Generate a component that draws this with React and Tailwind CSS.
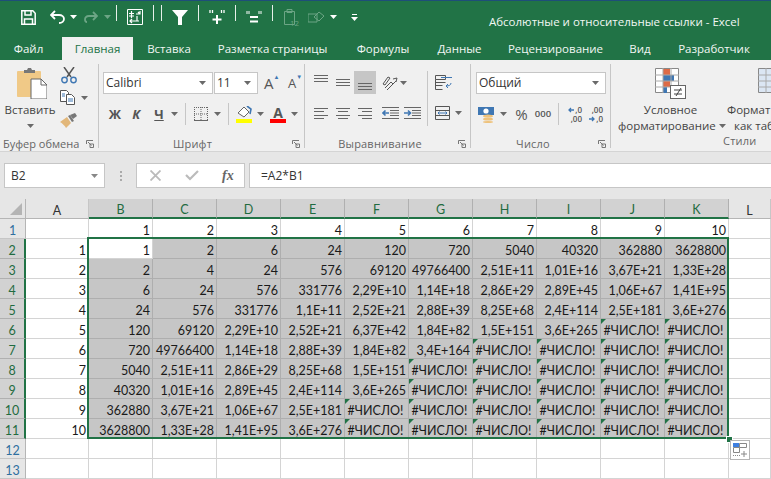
import React from 'react';

const E = '#ЧИСЛО!';
const COLS = ['A', 'B', 'C', 'D', 'E', 'F', 'G', 'H', 'I', 'J', 'K', 'L'];
const SELECTED = ['B', 'C', 'D', 'E', 'F', 'G', 'H', 'I', 'J', 'K'];

const ROWS = [
  ['', '1', '2', '3', '4', '5', '6', '7', '8', '9', '10', ''],
  ['1', '1', '2', '6', '24', '120', '720', '5040', '40320', '362880', '3628800', ''],
  ['2', '2', '4', '24', '576', '69120', '49766400', '2,51E+11', '1,01E+16', '3,67E+21', '1,33E+28', ''],
  ['3', '6', '24', '576', '331776', '2,29E+10', '1,14E+18', '2,86E+29', '2,89E+45', '1,06E+67', '1,41E+95', ''],
  ['4', '24', '576', '331776', '1,1E+11', '2,52E+21', '2,88E+39', '8,25E+68', '2,4E+114', '2,5E+181', '3,6E+276', ''],
  ['5', '120', '69120', '2,29E+10', '2,52E+21', '6,37E+42', '1,84E+82', '1,5E+151', '3,6E+265', E, E, ''],
  ['6', '720', '49766400', '1,14E+18', '2,88E+39', '1,84E+82', '3,4E+164', E, E, E, E, ''],
  ['7', '5040', '2,51E+11', '2,86E+29', '8,25E+68', '1,5E+151', E, E, E, E, E, ''],
  ['8', '40320', '1,01E+16', '2,89E+45', '2,4E+114', '3,6E+265', E, E, E, E, E, ''],
  ['9', '362880', '3,67E+21', '1,06E+67', '2,5E+181', E, E, E, E, E, E, ''],
  ['10', '3628800', '1,33E+28', '1,41E+95', '3,6E+276', E, E, E, E, E, E, ''],
  ['', '', '', '', '', '', '', '', '', '', '', ''],
  ['', '', '', '', '', '', '', '', '', '', '', ''],
];

const Chevron = ({ className = 'text-[#6a6a6a]' }) => (
  <svg width="7" height="4" viewBox="0 0 7 4" className={className}>
    <path d="M0 0h7L3.5 4z" fill="currentColor" />
  </svg>
);

const Launcher = () => (
  <svg width="8" height="8" viewBox="0 0 8 8" fill="none" stroke="#777">
    <path d="M.5 4V.5H7M7.500 7.500H4V4h3.500zM2 2l3.500 3.500" />
  </svg>
);

const Divider = ({ h = 'h-[20px]' }) => <div className={`w-px shrink-0 ${h} bg-[#c6c6c6]`} />;

// paragraph-align style icon made of horizontal lines
const Lines = ({ rows, h = 23 }) => (
  <svg width="14" height={h} viewBox={`0 0 14 ${h}`} stroke="#666">
    {rows.map(([y, x1, x2], i) => (
      <path key={i} d={`M${x1} ${y + 0.5}H${x2}`} />
    ))}
  </svg>
);

const Indent = ({ flip }) => (
  <svg width="17" height="12" viewBox="0 0 17 12" fill="none">
    <path d="M0 .5h17M0 11.500h17M8 3.500h9M8 6h9M8 8.500h9" stroke="#666" />
    <path d={flip ? 'M0 6h6M4 3.500L6.500 6 4 8.500' : 'M7 6H1M3.500 3.500L1 6l2.500 2.500'} stroke="#3f77b3" strokeWidth="1.6" />
  </svg>
);

const Combo = ({ w, label }) => (
  <div className={`${w} h-[22px] bg-white border border-[#c6c6c6] flex items-center justify-between pl-[2px] pr-[6px] text-[12px] text-[#333]`}>
    <span>{label}</span>
    <Chevron />
  </div>
);

const Group = ({ w, children }) => (
  <div className={`${w} shrink-0 mt-[4px] h-[84px] border-r border-[#c6c6c6] flex flex-col`}>{children}</div>
);

const GroupLabel = ({ children, pr }) => (
  <div className="h-[14px] -mb-[3px] flex items-center pr-[4px] text-[11px] tracking-[0.2px] text-[#666]">
    <span className={`flex-1 text-center ${pr}`}>{children}</span>
    <Launcher />
  </div>
);

function Clipboard() {
  return (
    <Group w="w-[99px]">
      <div className="flex flex-1">
        <div className="w-[60px] flex flex-col items-center">
          <svg width="30" height="31" viewBox="0 0 30 31" className="mt-[4px] ml-[4px]">
            <rect x="0" y="3" width="24" height="26" rx="1" fill="#f0c987" />
            <path d="M7 4V2h3l1-2h3l1 2h3v3H7z" fill="#777" />
            <path d="M14 11h10l6 6v14H14z" fill="#fff" stroke="#666" />
            <path d="M24 11v6h6" fill="none" stroke="#666" />
          </svg>
          <span className="mt-[3px] text-[11.500px] leading-[16px] text-[#444]">Вставить</span>
          <div className="mt-[6px]"><Chevron /></div>
        </div>
        <div className="flex flex-col items-start pt-[3px]">
          <svg width="16" height="17" viewBox="0 0 16 17" fill="none" className="ml-[1px]">
            <path d="M3 0l7 10M13 0L6 10" stroke="#555" strokeWidth="1.5" />
            <circle cx="3.500" cy="13" r="2.700" stroke="#3f77b3" strokeWidth="1.4" />
            <circle cx="12.500" cy="13" r="2.700" stroke="#3f77b3" strokeWidth="1.4" />
          </svg>
          <div className="flex items-center mt-[6px]">
            <svg width="16" height="15" viewBox="0 0 16 15" fill="none" stroke="#555">
              <path d="M.5.5h6l2 2v9H.5z" fill="#fff" />
              <path d="M6.500 4.500h5l3 3v7h-8z" fill="#fff" />
              <path d="M8 9h5M8 11h5M2 4h3M2 6h3" stroke="#3f77b3" />
            </svg>
            <span className="ml-[5px]"><Chevron /></span>
          </div>
          <svg width="17" height="15" viewBox="0 0 17 15" className="mt-[8px]">
            <path d="M0 9l7-5 4 6-5 5C5 13 2 10 0 9z" fill="#e2b77a" />
            <path d="M8 3l4 6 2-1-4-6z" fill="#777" />
            <path d="M10 2l5-2 2 3-4 3z" fill="#777" />
          </svg>
        </div>
      </div>
      <div className="h-[14px] -mb-[3px] flex items-center justify-between pl-[3px] pr-[4px] text-[11px] text-[#666]">
        <span>Буфер обмена</span>
        <Launcher />
      </div>
    </Group>
  );
}

function FontGroup() {
  return (
    <Group w="w-[206px]">
      <div className="flex-1 pl-[4px] pt-[8px]">
        <div className="flex items-center">
          <Combo w="w-[110px]" label="Calibri" />
          <Combo w="w-[44px] ml-[1px]" label="11" />
          <div className="ml-[6px] flex items-start w-[16px] text-[15px] leading-[18px] text-[#555]">
            A<span className="text-[#3f77b3] text-[6px] leading-[6px]">▲</span>
          </div>
          <div className="ml-[8px] flex items-start w-[16px] text-[13px] leading-[18px] text-[#555]">
            A<span className="text-[#3f77b3] text-[6px] leading-[6px]">▼</span>
          </div>
        </div>
        <div className="flex items-center mt-[9px] h-[22px] text-[#555]">
          <span className="w-[22px] ml-[1px] text-center text-[13px] font-bold">Ж</span>
          <span className="w-[20px] text-center text-[13px] font-bold italic">К</span>
          <span className="w-[22px] ml-[2px] text-center text-[13px] font-bold underline">Ч</span>
          <span className="ml-[1px] mr-[7px]"><Chevron /></span>
          <Divider h="h-[22px]" />
          <svg width="14" height="14" viewBox="0 0 14 14" stroke="#666" strokeDasharray="1 1" className="ml-[8px]">
            <path d="M.5 0v14M7 0v14M13.500 0v14M0 .5h14M0 7h14" fill="none" />
            <path d="M0 13.500h14" strokeDasharray="none" />
          </svg>
          <span className="ml-[6px] mr-[7px]"><Chevron /></span>
          <Divider h="h-[22px]" />
          <div className="ml-[7px] flex flex-col items-center w-[16px]">
            <svg width="15" height="13" viewBox="0 0 15 13" fill="none">
              <path d="M1 7l6-6 5 5-5 5z" fill="#fff" stroke="#666" />
              <path d="M10 0l4 3-1 5" stroke="#3f77b3" strokeWidth="1.6" />
            </svg>
            <div className="w-[16px] h-[4px] bg-[#ffff00]" />
          </div>
          <span className="ml-[5px]"><Chevron /></span>
          <div className="ml-[6px] flex flex-col items-center w-[16px]">
            <span className="text-[14px] leading-[13px] font-bold text-[#555]">A</span>
            <div className="w-[16px] h-[4px] bg-[#ff0000]" />
          </div>
          <span className="ml-[5px]"><Chevron /></span>
        </div>
      </div>
      <GroupLabel pr="pr-[6px]">Шрифт</GroupLabel>
    </Group>
  );
}

function AlignGroup() {
  const Slot = ({ children, active, h = 'h-[23px]' }) => (
    <div className={`w-[22px] ${h} flex items-center justify-center ${active ? 'bg-[#c6c6c6]' : ''}`}>{children}</div>
  );
  return (
    <Group w="w-[166px]">
      <div className="flex-1 flex pl-[5px] pt-[7px]">
        <div className="w-[117px] shrink-0">
          <div className="flex items-center">
            <Slot><Lines rows={[[4, 0, 14], [7, 0, 14], [10, 0, 14]]} /></Slot>
            <Slot><Lines rows={[[8, 0, 14], [11, 0, 14], [14, 0, 14]]} /></Slot>
            <Slot active><Lines rows={[[12, 0, 14], [15, 0, 14], [18, 0, 14]]} /></Slot>
            <div className="ml-[6px]">
              <svg width="17" height="16" viewBox="0 0 17 16" fill="none" stroke="#555">
                <path d="M1 9l5-7 2 1-5 7zM3 13l6-6 2 2M5 15l9-9M11 4l4-1-1 4" />
              </svg>
            </div>
            <span className="ml-[1px]"><Chevron /></span>
          </div>
          <div className="flex items-center mt-[8px]">
            <Slot h="h-[22px]"><Lines h={22} rows={[[6, 0, 14], [9, 0, 10], [13, 0, 14], [16, 0, 10]]} /></Slot>
            <Slot h="h-[22px]"><Lines h={22} rows={[[6, 0, 14], [9, 2, 12], [13, 0, 14], [16, 2, 12]]} /></Slot>
            <Slot h="h-[22px]"><Lines h={22} rows={[[6, 0, 14], [9, 4, 14], [13, 0, 14], [16, 4, 14]]} /></Slot>
            <div className="ml-[6px]"><Indent /></div>
            <div className="ml-[5px]"><Indent flip /></div>
          </div>
        </div>
        <Divider h="h-[55px]" />
        <div className="ml-[7px] flex flex-col">
          <svg width="17" height="15" viewBox="0 0 17 15" fill="none" stroke="#555" className="mt-[4px]">
            <path d="M.5.5h10v4H.5zM.5 7.500h10M.5 10.500h7M.5 14.500h7M.5 4.500v10" />
            <path d="M6 2.500h11M16 8c0 2-2 3-5 3M13 9l-2 2 2 2" stroke="#3f77b3" />
          </svg>
          <div className="flex items-center mt-[16px]">
            <svg width="15" height="14" viewBox="0 0 15 14" fill="none" stroke="#555">
              <path d="M.5.5h14v13H.5zM.5 4.500h14M.5 9.500h14" />
              <path d="M3 7h9M4.500 5.500L3 7l1.500 1.500M10.500 5.500L12 7l-1.500 1.500" stroke="#3f77b3" />
            </svg>
            <span className="ml-[5px]"><Chevron /></span>
          </div>
        </div>
      </div>
      <GroupLabel pr="pr-[3px]">Выравнивание</GroupLabel>
    </Group>
  );
}

function NumberGroup() {
  return (
    <Group w="w-[140px]">
      <div className="flex-1 pl-[5px] pt-[8px]">
        <Combo w="w-[130px]" label="Общий" />
        <div className="flex items-center mt-[9px] h-[22px] text-[#555]">
          <svg width="17" height="17" viewBox="0 0 17 17" className="ml-[2px]">
            <rect x="0" y="1" width="16" height="8" fill="#3f77b3" />
            <circle cx="8" cy="5" r="2.600" fill="#fff" />
            <ellipse cx="10" cy="10" rx="5" ry="1.600" fill="#eec27b" />
            <ellipse cx="10" cy="13" rx="5" ry="1.600" fill="#eec27b" />
            <ellipse cx="10" cy="16" rx="5" ry="1" fill="#eec27b" />
          </svg>
          <span className="ml-[5px]"><Chevron /></span>
          <span className="ml-[7px] w-[15px] text-center text-[15px] leading-none">%</span>
          <span className="ml-[5px] w-[18px] text-center text-[9.500px] font-semibold">000</span>
          <div className="ml-[6px] mr-[8px]"><Divider h="h-[22px]" /></div>
          <div className="w-[15px] flex flex-col items-end text-[8px] leading-[9px] font-semibold">
            <div className="flex items-center gap-[1px]">
              <svg width="6" height="6" viewBox="0 0 6 6" fill="none" stroke="#3f77b3" strokeWidth="1.300"><path d="M6 3H1M3 1L1 3l2 2" /></svg>
              <span>,0</span>
            </div>
            <div>,00</div>
          </div>
          <div className="ml-[6px] w-[15px] flex flex-col items-end text-[8px] leading-[9px] font-semibold">
            <div>,00</div>
            <div className="flex items-center gap-[1px]">
              <svg width="6" height="6" viewBox="0 0 6 6" fill="none" stroke="#3f77b3" strokeWidth="1.300"><path d="M0 3h5M3 1l2 2-2 2" /></svg>
              <span>,0</span>
            </div>
          </div>
        </div>
      </div>
      <GroupLabel pr="pr-[3px]">Число</GroupLabel>
    </Group>
  );
}

function StylesGroup() {
  return (
    <div className="flex-1 mt-[4px] h-[88px] flex flex-col overflow-hidden">
      <div className="h-[70px] flex">
        <div className="w-[113px] shrink-0 flex flex-col items-center text-[11.500px] leading-[16px] text-[#444]">
          <svg width="31" height="31" viewBox="0 0 31 31" className="mt-[4px] ml-[6px]">
            <path d="M.5.5h23v24H.5z" fill="#fff" stroke="#888" />
            <rect x="8" y="1" width="7" height="6" fill="#dd6b47" />
            <rect x="8" y="7" width="11" height="6" fill="#3f77b3" />
            <rect x="8" y="13" width="7" height="6" fill="#dd6b47" />
            <rect x="8" y="19" width="4" height="6" fill="#3f77b3" />
            <path d="M8 0v25M16 0v25M0 7h24M0 13h24M0 19h24" stroke="#aaa" fill="none" />
            <rect x="15.500" y="17.500" width="15" height="13" fill="#fff" stroke="#666" />
            <path d="M19 22h8M19 26h8M26 20l-5 8" stroke="#444" fill="none" />
          </svg>
          <span className="mt-[3px] ml-[6px]">Условное</span>
          <span className="self-start ml-[7px] flex items-center gap-[3px] whitespace-nowrap">
            форматирование <Chevron />
          </span>
        </div>
        <div className="flex flex-col w-[60px] shrink-0 text-[11.500px] leading-[16px] text-[#444]">
          <svg width="31" height="31" viewBox="0 0 31 31" className="mt-[4px] ml-[34px] shrink-0">
            <path d="M.5.5h23v24H.5z" fill="#dbe6f3" stroke="#888" />
            <path d="M8 0v25M16 0v25M0 7h24M0 13h24M0 19h24" stroke="#aaa" fill="none" />
            <path d="M14 30l16-14v14z" fill="#3f77b3" />
          </svg>
          <span className="mt-[3px] ml-[3px] whitespace-nowrap">Формат</span>
          <span className="ml-[10px] whitespace-nowrap">как таблицу</span>
        </div>
      </div>
      <div className="h-[14px] flex items-center text-[11px] tracking-[0.2px] text-[#666]">
        <span className="pl-[112px]">Стили</span>
      </div>
    </div>
  );
}

function TitleBar() {
  const Sep = () => <div className="w-px h-[16px] bg-[#e8f0ea] mb-[9px]" />;
  return (
    <div className="h-[37px] bg-[#217346] border-t border-[#1e4e79] flex items-center text-white">
      <div className="flex items-center pl-[21px] w-[480px] shrink-0 pb-[3px]">
        <svg width="15" height="15" viewBox="0 0 15 15" fill="none" stroke="#fff" strokeWidth="1.5">
          <path d="M.8.8h11l2.400 2.400v11H.8zM4 1v4h6V1M3.500 14V9h8v5" />
        </svg>
        <svg width="16" height="14" viewBox="0 0 16 14" fill="none" stroke="#fff" strokeWidth="1.8" className="ml-[14px]">
          <path d="M5 1L1 5l4 4M1 5h8c3 0 5 2 5 4s-2 4-5 4" />
        </svg>
        <span className="ml-[4px]"><Chevron className="text-white" /></span>
        <svg width="14" height="12" viewBox="0 0 14 12" fill="none" stroke="#6ca585" strokeWidth="1.8" className="ml-[7px]">
          <path d="M9 1l4 4-4 4M13 5H5C2 5 1 7 1 8.500S2 11 3 11" />
        </svg>
        <span className="ml-[6px] mr-[5px]"><Chevron className="text-[#6ca585]" /></span>
        <Sep />
        <svg width="16" height="16" viewBox="0 0 16 16" fill="none" stroke="#fff" className="ml-[10px]">
          <path d="M.5.5h15v15H.5z" />
          <path d="M4.500 2v7M2 4.500h5M2 7h5" strokeWidth="1.200" />
          <path d="M9 5h4V2M13 5l-2-2M3 12h9M5 10l-2 2 2 2M10 7v5" strokeWidth="1.200" />
        </svg>
        <div className="ml-[10px]"><Sep /></div>
        <div className="ml-[7px]"><Sep /></div>
        <svg width="17" height="15" viewBox="0 0 17 15" className="ml-[10px]">
          <path d="M0 0h16L10 7v8H6V7z" fill="#fff" />
        </svg>
        <div className="ml-[9px]"><Sep /></div>
        <svg width="16" height="14" viewBox="0 0 16 14" fill="none" stroke="#fff" className="ml-[10px]">
          <path d="M1 0v3M3.500 0v3M12.500 0v3M15 0v3" strokeWidth="1.300" />
          <path d="M8 5v9M3.500 9.500h9" strokeWidth="2" />
        </svg>
        <div className="ml-[10px]"><Sep /></div>
        <svg width="16" height="12" viewBox="0 0 16 12" fill="none" stroke="#fff" className="ml-[10px]">
          <path d="M1 0v3M3 0v3M13 0v3M15 0v3" strokeWidth="1" />
          <path d="M4 6h8M4 10.500h8" strokeWidth="2" />
        </svg>
        <div className="ml-[10px]"><Sep /></div>
        <svg width="16" height="17" viewBox="0 0 16 17" fill="none" stroke="#6ca585" className="ml-[11px]">
          <path d="M.5 2.500h10v13H.5zM3 .5h5v3H3z" />
          <text x="6" y="16.500" fontSize="8" fill="#6ca585" stroke="none">12</text>
        </svg>
        <svg width="17" height="16" viewBox="0 0 17 16" fill="none" stroke="#6ca585" className="ml-[8px]">
          <path d="M0 5h9v8H0zM6 8l5-5 5 4-5 5z" />
        </svg>
        <span className="ml-[5px]"><Chevron className="text-white" /></span>
        <div className="ml-[14px] flex flex-col items-center gap-[2px]">
          <div className="w-[5px] h-px bg-white" />
          <Chevron className="text-white" />
        </div>
      </div>
      <span className="pl-[9px] pt-[6px] text-[11.500px] whitespace-nowrap text-[#f2f7f4]">Абсолютные и относительные ссылки - Excel</span>
    </div>
  );
}

function Tabs() {
  const tabs = [
    ['Вставка', 'w-[72px]'],
    ['Разметка страницы', 'w-[135px]'],
    ['Формулы', 'w-[86px]'],
    ['Данные', 'w-[67px]'],
    ['Рецензирование', 'w-[125px]'],
    ['Вид', 'w-[44px]'],
    ['Разработчик', 'w-[104px]'],
  ];
  return (
    <div className="h-[24px] bg-[#217346] flex text-[11.500px] text-[#f2f7f4]">
      <div className="w-[62px] pr-[5px] pt-[1px] flex items-center justify-center">Файл</div>
      <div className="w-[71px] pt-[1px] bg-[#f0f0f0] text-[#217346] flex items-center justify-center">Главная</div>
      {tabs.map(([t, w]) => (
        <div key={t} className={`${w} pt-[1px] flex items-center justify-center whitespace-nowrap`}>{t}</div>
      ))}
    </div>
  );
}

function FormulaBar() {
  return (
    <div className="h-[47px] bg-[#e6e6e6] pt-[11px] flex items-start">
      <div className="ml-[4px] w-[101px] h-[25px] bg-white border border-[#c6c6c6] flex items-center justify-between pl-[6px] pr-[6px] text-[12px] text-[#333]">
        <span>B2</span>
        <Chevron className="text-[#888]" />
      </div>
      <div className="w-[31px] h-[25px] flex flex-col items-center justify-center gap-[2px]">
        <div className="w-[2px] h-[2px] bg-[#aaa]" />
        <div className="w-[2px] h-[2px] bg-[#aaa]" />
        <div className="w-[2px] h-[2px] bg-[#aaa]" />
      </div>
      <div className="w-[109px] h-[25px] bg-white border border-[#c6c6c6] flex items-center">
        <svg width="11" height="11" viewBox="0 0 11 11" stroke="#bbb" strokeWidth="1.800" className="ml-[13px]">
          <path d="M.5.5l10 10M10.500.5l-10 10" />
        </svg>
        <svg width="14" height="11" viewBox="0 0 14 11" fill="none" stroke="#bbb" strokeWidth="2.200" className="ml-[24px]">
          <path d="M1 5l4 4 8-8" />
        </svg>
        <span className="ml-[23px] text-[14px] italic font-bold text-[#666] font-['Liberation_Serif',serif]">fx</span>
      </div>
      <div className="ml-[4px] flex-1 h-[25px] bg-white border border-[#c6c6c6] border-r-0 flex items-center pl-[11px] text-[12px] text-[#333]">
        =A2*B1
      </div>
    </div>
  );
}

function Sheet() {
  return (
    <div className="relative flex-1 bg-white font-['Lato',sans-serif] text-[12.500px] leading-[14px]">
      <div className="grid grid-cols-[26px_63px_repeat(10,64px)_42px] grid-rows-[20px_repeat(13,20px)] w-[771px] overflow-hidden">
        <div className="bg-[#e6e6e6] border-r border-b border-[#b5b5b5] flex items-end justify-end pr-[3px] pb-[3px]">
          <svg width="12" height="12" viewBox="0 0 12 12"><path d="M12 0v12H0z" fill="#b4b4b4" /></svg>
        </div>
        {COLS.map((c) => {
          const sel = SELECTED.includes(c);
          return (
            <div
              key={c}
              className={`flex items-end justify-center border-r ${sel ? 'bg-[#d2d2d2] border-[#b0b0b0] border-b-2 border-b-[#217346] text-[#1f6b40]' : 'bg-[#e6e6e6] border-[#c6c6c6] border-b border-b-[#b5b5b5] text-[#333]'}`}
            >
              {c}
            </div>
          );
        })}
        {ROWS.map((cells, r) => {
          const inSel = r >= 1 && r <= 10;
          return (
            <React.Fragment key={r}>
              <div
                className={`flex items-end justify-center border-b ${inSel ? 'bg-[#d2d2d2] border-[#b0b0b0] border-r-2 border-r-[#217346] text-[#1f6b40]' : 'bg-[#e6e6e6] border-[#c6c6c6] border-r border-r-[#b5b5b5] text-[#2f6f9f]'}`}
              >
                {r + 1}
              </div>
              {cells.map((v, c) => {
                const sel = inSel && c >= 1 && c <= 10;
                const active = r === 1 && c === 1;
                const err = v === E;
                return (
                  <div
                    key={c}
                    className={`relative flex items-end overflow-visible whitespace-nowrap border-r border-b pr-[2px] text-[#1a1a1a] ${err ? 'justify-center' : 'justify-end'} ${active ? 'bg-white border-[#d4d4d4]' : sel ? 'bg-[#c6c6c6] border-[#aeaeae]' : 'bg-white border-[#d4d4d4]'}`}
                  >
                    {err && <div className="absolute left-0 top-0 w-0 h-0 border-t-[5px] border-r-[5px] border-t-[#217346] border-r-transparent" />}
                    {v}
                  </div>
                );
              })}
            </React.Fragment>
          );
        })}
      </div>
      {/* selection frame */}
      <div className="absolute left-[87px] top-[38px] w-[642px] h-[202px] border-2 border-[#217346] pointer-events-none" />
      <div className="absolute left-[726px] top-[237px] w-[5px] h-[5px] bg-[#217346] border border-white box-content" />
      {/* quick analysis button */}
      <div className="absolute left-[730px] top-[241px] w-[20px] h-[20px] bg-white border border-[#b5b5b5] flex items-center justify-center">
        <svg width="14" height="14" viewBox="0 0 14 14" fill="none">
          <rect x="0" y="0" width="6" height="4" fill="#3f7fe0" />
          <path d="M6.500.5h7v4h-7zM.5 4.500h6v5h-6z" stroke="#888" />
          <path d="M0 12.500h7" stroke="#888" strokeDasharray="1 1" />
          <path d="M11 8v6M8 11h6" stroke="#888" />
        </svg>
      </div>
    </div>
  );
}

export default function App() {
  return (
    <div className="w-[771px] h-[479px] overflow-hidden flex flex-col bg-[#e6e6e6] font-['Open_Sans',sans-serif]">
      <TitleBar />
      <Tabs />
      <div className="h-[92px] bg-[#f0f0f0] border-b border-[#d4d4d4] flex shrink-0">
        <Clipboard />
        <FontGroup />
        <AlignGroup />
        <NumberGroup />
        <StylesGroup />
      </div>
      <FormulaBar />
      <Sheet />
    </div>
  );
}
